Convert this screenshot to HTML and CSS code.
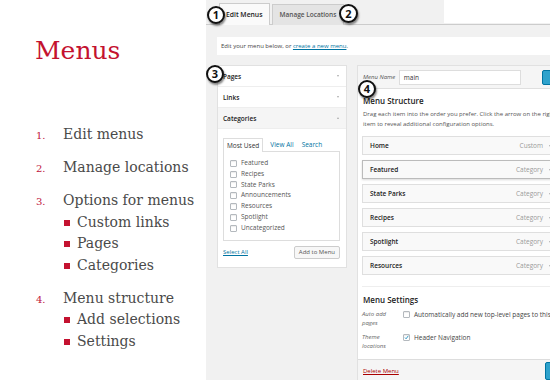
FILE: index.html
```html
<!DOCTYPE html>
<html lang="en">
<head>
    <meta charset="UTF-8">
    <meta name="viewport" content="width=device-width, initial-scale=1.0">
    <title>Menus</title>
    <link rel="stylesheet" href="styles.css">
</head>
<body>
    <div class="slide">
        <h1 class="title">Menus</h1>
        <ol class="steps">
            <li class="step"><span class="num">1.</span>Edit menus</li>
            <li class="step"><span class="num">2.</span>Manage locations</li>
            <li class="step"><span class="num">3.</span>Options for menus
                <ul class="sub">
                    <li>Custom links</li>
                    <li>Pages</li>
                    <li>Categories</li>
                </ul>
            </li>
            <li class="step"><span class="num">4.</span>Menu structure
                <ul class="sub">
                    <li>Add selections</li>
                    <li>Settings</li>
                </ul>
            </li>
        </ol>
    </div>

    <div class="wp">
        <div class="tabs">
            <div class="tab active">Edit Menus</div>
            <div class="tab">Manage Locations</div>
            <div class="screen-meta"></div>
        </div>

        <div class="notice">Edit your menu below, or <a href="#">create a new menu</a>.</div>

        <div class="columns">
            <div class="accordion">
                <div class="acc-head">Pages <span class="caret"></span></div>
                <div class="acc-head">Links <span class="caret"></span></div>
                <div class="acc-head open">Categories <span class="caret up"></span></div>
                <div class="acc-body">
                    <div class="cat-tabs">
                        <span class="cat-tab current">Most Used</span>
                        <a href="#" class="cat-tab">View All</a>
                        <a href="#" class="cat-tab">Search</a>
                    </div>
                    <div class="cat-list">
                        <div class="cat"><span class="box"></span>Featured</div>
                        <div class="cat"><span class="box"></span>Recipes</div>
                        <div class="cat"><span class="box"></span>State Parks</div>
                        <div class="cat"><span class="box"></span>Announcements</div>
                        <div class="cat"><span class="box"></span>Resources</div>
                        <div class="cat"><span class="box"></span>Spotlight</div>
                        <div class="cat"><span class="box"></span>Uncategorized</div>
                    </div>
                    <div class="acc-foot">
                        <a href="#">Select All</a>
                        <span class="button">Add to Menu</span>
                    </div>
                </div>
            </div>

            <div class="editor">
                <div class="editor-head">
                    <span class="name-label">Menu Name</span>
                    <span class="name-input">main</span>
                    <span class="button primary"></span>
                </div>
                <div class="editor-body">
                    <h3 class="heading">Menu Structure</h3>
                    <p class="desc">Drag each item into the order you prefer. Click the arrow on the right of the<br>item to reveal additional configuration options.</p>
                    <div class="item"><span>Home</span><span class="type">Custom</span><span class="caret"></span></div>
                    <div class="item lifted"><span>Featured</span><span class="type">Category</span><span class="caret"></span></div>
                    <div class="item"><span>State Parks</span><span class="type">Category</span><span class="caret"></span></div>
                    <div class="item"><span>Recipes</span><span class="type">Category</span><span class="caret"></span></div>
                    <div class="item"><span>Spotlight</span><span class="type">Category</span><span class="caret"></span></div>
                    <div class="item"><span>Resources</span><span class="type">Category</span><span class="caret"></span></div>

                    <div class="settings">
                        <h3 class="heading">Menu Settings</h3>
                        <div class="setting">
                            <div class="setting-label">Auto add<br>pages</div>
                            <div class="setting-value"><span class="box"></span>Automatically add new top-level pages to this menu</div>
                        </div>
                        <div class="setting">
                            <div class="setting-label">Theme<br>locations</div>
                            <div class="setting-value"><span class="box checked"><svg viewBox="0 0 10 10" width="9" height="9"><path d="M2 5.2 L4.2 7.6 L8.6 1.6" fill="none" stroke="#1e8cbe" stroke-width="1.8"/></svg></span>Header Navigation</div>
                        </div>
                    </div>
                </div>
                <div class="editor-foot">
                    <a href="#" class="delete">Delete Menu</a>
                    <span class="button primary"></span>
                </div>
            </div>
        </div>

        <span class="badge b1">1</span>
        <span class="badge b2">2</span>
        <span class="badge b3">3</span>
        <span class="badge b4">4</span>
    </div>
</body>
</html>
```

FILE: styles.css
```css
body {
    margin: 0;
    padding: 0;
    display: flex;
    height: 380px;
    overflow: hidden;
    background-color: white;
}
.slide {
    width: 206px;
    flex-shrink: 0;
    font-family: "DejaVu Serif", serif;
    color: #4a4a4a;
}
.title {
    margin: 35px 0 0 35px;
    font-size: 25px;
    line-height: 32px;
    font-weight: normal;
    color: #c4122f;
}
.steps {
    list-style: none;
    margin: 57px 0 0 0;
    padding: 0 0 0 36px;
    font-size: 14px;
    line-height: 21.5px;
}
.step { margin-bottom: 11.5px; }
.num {
    display: inline-block;
    width: 27px;
    font-size: 10px;
    line-height: 1;
    color: #c0143c;
}
.sub {
    list-style: none;
    margin: 0 0 0 27px;
    padding: 0;
}
.sub li {
    position: relative;
    padding-left: 14px;
}
.sub li::before {
    content: "";
    position: absolute;
    left: 1px;
    top: 8px;
    width: 6px;
    height: 6px;
    background: #c41230;
}

/* screenshot of the admin screen */
.wp {
    position: relative;
    width: 344px;
    height: 380px;
    overflow: hidden;
    background: #f1f1f1;
    font-family: "Open Sans", sans-serif;
    font-size: 6px;
    color: #444;
}
.wp a { color: #0074a2; }
.tabs {
    display: flex;
    align-items: flex-end;
    height: 24px;
    padding-left: 13px;
    border-bottom: 1px solid #ccc;
}
.tab {
    height: 20px;
    line-height: 20px;
    padding: 0 7px;
    margin-right: 2px;
    margin-bottom: -1px;
    border: 1px solid #ccc;
    border-bottom: none;
    background: #e4e4e4;
    font-size: 6.5px;
    font-weight: 600;
    color: #555;
}
.tab.active {
    height: 21px;
    line-height: 21px;
    padding: 0 6px;
    background: #fafafa;
    font-size: 6.8px;
    color: #222;
}
.screen-meta {
    align-self: flex-start;
    margin-left: auto;
    width: 106px;
    height: 23px;
    background: #fff;
}
.notice {
    margin: 12px 0 0 11px;
    height: 18px;
    line-height: 18px;
    padding-left: 4px;
    background: #fff;
    white-space: nowrap;
}
.columns {
    display: flex;
    align-items: flex-start;
    gap: 10px;
    margin-top: 10px;
    padding-left: 11px;
}
.accordion {
    width: 130px;
    flex-shrink: 0;
    background: #fff;
    border: 1px solid #e1e1e1;
    box-sizing: border-box;
}
.acc-head {
    display: flex;
    justify-content: space-between;
    align-items: center;
    height: 20px;
    padding: 0 7px 0 5px;
    border-bottom: 1px solid #eee;
    font-size: 6.5px;
    font-weight: 600;
    color: #222;
}
.acc-head.open { background: #f5f5f5; }
.caret {
    width: 0;
    height: 0;
    border-left: 1.5px solid transparent;
    border-right: 1.5px solid transparent;
    border-top: 2px solid #aaa;
}
.caret.up {
    border-top: none;
    border-bottom: 2px solid #aaa;
}
.acc-body { padding: 9px 6px 8px 5px; }
.cat-tabs {
    display: flex;
    height: 13px;
    line-height: 13px;
}
.cat-tab {
    padding: 0 4px;
    text-decoration: none;
    font-size: 6.5px;
}
.cat-tab.current {
    background: #fff;
    border: 1px solid #ddd;
    border-bottom: none;
    margin-bottom: -1px;
    position: relative;
    color: #333;
    padding: 0 3px;
    margin-right: 3px;
}
.cat-list {
    border: 1px solid #ddd;
    padding: 6px 6px;
    font-size: 6.5px;
    line-height: 10.8px;
    color: #555;
}
.cat { display: flex; align-items: center; }
.box {
    display: inline-flex;
    align-items: center;
    justify-content: center;
    width: 5px;
    height: 5px;
    margin-right: 4px;
    border: 1px solid #b4b9be;
    border-radius: 1px;
    background: #fff;
    box-shadow: inset 0 1px 1px rgba(0, 0, 0, 0.08);
    flex-shrink: 0;
}
.acc-foot {
    display: flex;
    justify-content: space-between;
    align-items: center;
    margin-top: 5px;
}
.button {
    display: inline-block;
    height: 11px;
    line-height: 11px;
    padding: 0 4px;
    border: 1px solid #ccc;
    border-radius: 2px;
    background: #f7f7f7;
    color: #555;
    font-size: 6px;
}
.button.primary {
    width: 20px;
    padding: 0;
    background: #2ea2cc;
    border-color: #0074a2;
}
.editor {
    width: 205px;
    flex-shrink: 0;
    background: #fff;
    border: 1px solid #e1e1e1;
}
.editor-head {
    display: flex;
    align-items: center;
    height: 22px;
    padding-left: 5px;
    background: #f5f5f5;
    border-bottom: 1px solid #dfdfdf;
}
.name-label {
    width: 37px;
    font-style: italic;
    color: #555;
}
.name-input {
    width: 120px;
    height: 13px;
    line-height: 13px;
    padding-left: 4px;
    background: #fff;
    border: 1px solid #ddd;
    font-size: 6.5px;
    color: #333;
}
.editor-head .button.primary {
    margin-left: 21px;
    height: 13px;
}
.editor-body { padding: 0 4px; }
.heading {
    margin: 6px 0 0 1px;
    font-size: 8px;
    line-height: 12px;
    font-weight: 600;
    color: #222;
}
.desc {
    margin: 2px 0 7px 1px;
    line-height: 10px;
    white-space: nowrap;
    color: #555;
}
.item {
    display: flex;
    align-items: center;
    height: 17px;
    padding: 0 7px;
    margin-bottom: 5px;
    background: #f9f9f9;
    border: 1px solid #dfdfdf;
    font-size: 6.5px;
    font-weight: 600;
    color: #222;
}
.item.lifted {
    border-color: #bbb;
    box-shadow: 0 1px 2px rgba(0, 0, 0, 0.15);
}
.item .type {
    margin-left: auto;
    margin-right: 6px;
    font-weight: normal;
    color: #999;
}
.settings {
    margin-top: 11px;
    padding: 1px 0 8px;
    border-top: 1px solid #eee;
}
.setting {
    display: flex;
    margin-top: 4px;
    line-height: 9px;
}
.setting + .setting { margin-top: 5px; }
.setting-label {
    width: 41px;
    flex-shrink: 0;
    font-style: italic;
    color: #666;
}
.setting-value {
    display: flex;
    align-items: center;
    height: 9px;
    white-space: nowrap;
    font-size: 6.5px;
    color: #444;
}
.editor-foot {
    display: flex;
    align-items: center;
    height: 22px;
    padding-left: 5px;
    background: #f5f5f5;
    border-top: 1px solid #ddd;
}
.delete { color: #a00 !important; }
.editor-foot .button.primary {
    margin-left: auto;
    margin-right: -4px;
    height: 16px;
}
.badge {
    position: absolute;
    width: 14px;
    height: 14px;
    line-height: 14px;
    border: 2px solid #111;
    border-radius: 50%;
    background: #fff;
    box-shadow: 1px 2px 2px rgba(0, 0, 0, 0.45);
    text-align: center;
    font-family: "Open Sans", sans-serif;
    font-size: 11px;
    font-weight: 700;
    color: #111;
}
.b1 { left: 1px; top: 6px; }
.b2 { left: 133px; top: 4px; width: 15px; height: 15px; line-height: 15px; }
.b3 { left: 0; top: 65px; }
.b4 { left: 152px; top: 80px; }
```
